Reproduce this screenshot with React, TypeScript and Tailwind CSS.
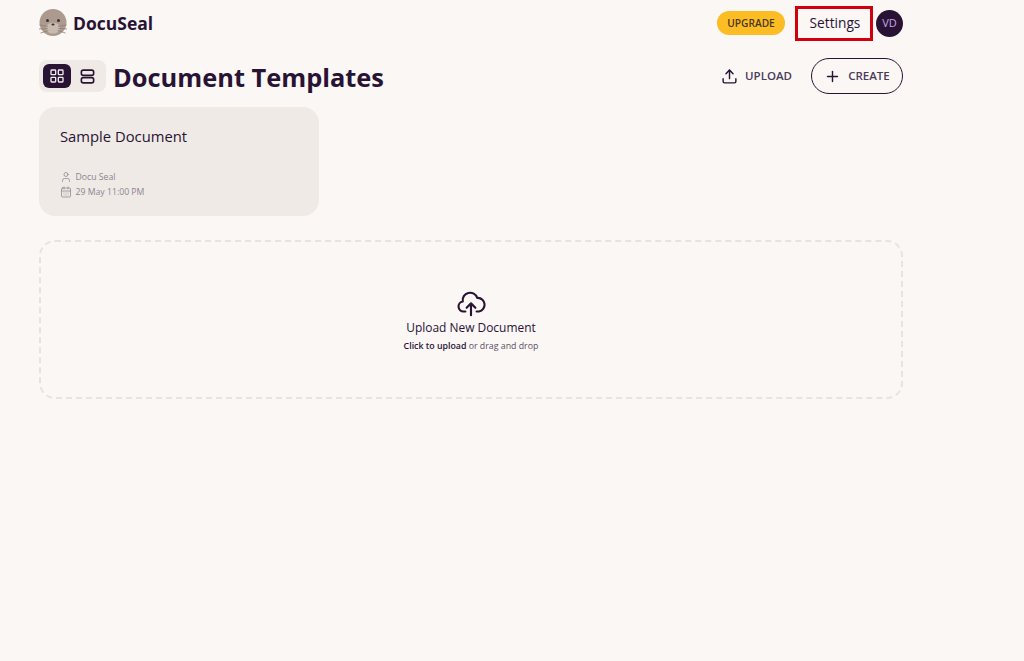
import React from 'react';
import { CalendarDays, LayoutGrid, Plus, Upload, User } from 'lucide-react';

const SealLogo = () => (
  <svg width="28" height="28" viewBox="0 0 28 28" className="shrink-0">
    <circle cx="14" cy="13.5" r="13.5" fill="#ab9a8d" />
    <ellipse cx="14" cy="19" rx="7" ry="5.5" fill="#c9bcae" />
    <circle cx="8.5" cy="11.5" r="1.5" fill="#3a3040" />
    <circle cx="19.5" cy="11.5" r="1.5" fill="#3a3040" />
    <ellipse cx="14" cy="15.5" rx="1.6" ry="1.1" fill="#3a3040" />
    <path
      d="M9 17.5 L0.5 16 M9 19.5 L0 20 M9.5 21.5 L1.5 24 M19 17.5 L27.5 16 M19 19.5 L28 20 M18.5 21.5 L26.5 24"
      stroke="#8f7f73"
      strokeWidth="0.8"
      fill="none"
    />
  </svg>
);

const RowsIcon = () => (
  <svg width="17" height="17" viewBox="0 0 18 18" fill="none" stroke="currentColor" strokeWidth="1.7" className="-ml-[2px]">
    <rect x="2.5" y="2.2" width="13" height="5.6" rx="2" />
    <rect x="2.5" y="10.2" width="13" height="5.6" rx="2" />
  </svg>
);

const CloudUpload = () => (
  <svg width="30" height="30" viewBox="0 0 24 24" fill="none" stroke="#291334" strokeWidth="1.7" strokeLinecap="round" strokeLinejoin="round">
    <path d="M7.5 18H6a4 4 0 0 1-.6-7.95A6 6 0 0 1 17 7.1h.5a5.5 5.5 0 0 1 .9 10.9H16.5" />
    <path d="M12 21v-9" />
    <path d="M8.5 15 12 11.5 15.5 15" />
  </svg>
);

export default function App() {
  return (
    <div className="min-h-[661px] bg-[#faf7f5] pl-[39px] text-[#291334] [font-family:'Open_Sans','Noto_Sans',sans-serif]">
      <div className="w-[864px]">
        {/* шапка */}
        <header className="flex h-[46px] items-center justify-between">
          <div className="flex items-center gap-[6px]">
            <SealLogo />
            <span className="pt-[1px] text-[17.5px] font-bold leading-none">DocuSeal</span>
          </div>
          <div className="flex items-center">
            <span className="flex h-6 w-[68px] items-center justify-center rounded-full bg-[#fbbd23] pt-[1px] text-[10.2px] font-semibold text-[#4a3720]">
              UPGRADE
            </span>
            <span className="ml-[10px] flex h-[35px] w-[78px] items-center justify-center border-[3px] border-[#d0000f] pl-[2px] text-[13.7px] font-medium">
              Settings
            </span>
            <span className="ml-[3px] flex h-[27px] w-[27px] items-center justify-center rounded-full bg-[#291334] text-[11px] text-[#c9a6e8]">
              VD
            </span>
          </div>
        </header>

        {/* заголовок */}
        <div className="mt-[12px] flex h-[36px] items-center justify-between">
          <div className="flex items-center gap-[7px]">
            <div className="flex h-8 w-[67px] items-center gap-[4px] rounded-lg bg-[#efeae6] px-[4px]">
              <span className="flex h-6 w-[28px] items-center justify-center rounded-md bg-[#291334] text-[#efeae6]">
                <LayoutGrid size={16} strokeWidth={2} />
              </span>
              <span className="flex h-6 w-[28px] items-center justify-center">
                <RowsIcon />
              </span>
            </div>
            <h1 className="pt-[3px] text-[25.4px] font-bold leading-none">Document Templates</h1>
          </div>
          <div className="flex items-center">
            <span className="flex items-center gap-[7px] text-[11.5px] font-semibold text-[#4a3b59]">
              <Upload size={17} strokeWidth={2} className="text-[#291334]" />
              UPLOAD
            </span>
            <span className="ml-[19px] flex h-9 w-[92px] items-center justify-center gap-[7px] rounded-full border border-[#291334] text-[11.5px] font-semibold text-[#4a3b59]">
              <Plus size={17} strokeWidth={2} className="text-[#291334]" />
              CREATE
            </span>
          </div>
        </div>

        {/* карточка */}
        <div className="mt-[13px] flex h-[109px] w-[280px] flex-col justify-between rounded-2xl bg-[#efeae6] px-[21px] pb-[17px] pt-[19px]">
          <div className="text-[14.8px] font-medium leading-5">Sample Document</div>
          <div className="flex flex-col gap-[1px] text-[8.7px] leading-[14px] text-[#8e8390]">
            <div className="flex items-center gap-[3.5px]">
              <User size={12} strokeWidth={1.5} />
              Docu Seal
            </div>
            <div className="flex items-center gap-[3.5px]">
              <CalendarDays size={12} strokeWidth={1.5} />
              29 May 11:00 PM
            </div>
          </div>
        </div>

        {/* загрузка */}
        <div className="mt-[24px] flex h-[159px] flex-col items-center justify-center rounded-2xl border-2 border-dashed border-[#e8e3de] pt-[2px]">
          <CloudUpload />
          <div className="text-[11.95px] font-medium leading-[18px]">Upload New Document</div>
          <div className="mt-[2px] text-[8.8px] leading-[14px]">
            <span className="font-semibold">Click to upload</span> <span className="text-[#5b4f66]">or drag and drop</span>
          </div>
        </div>
      </div>
    </div>
  );
}
